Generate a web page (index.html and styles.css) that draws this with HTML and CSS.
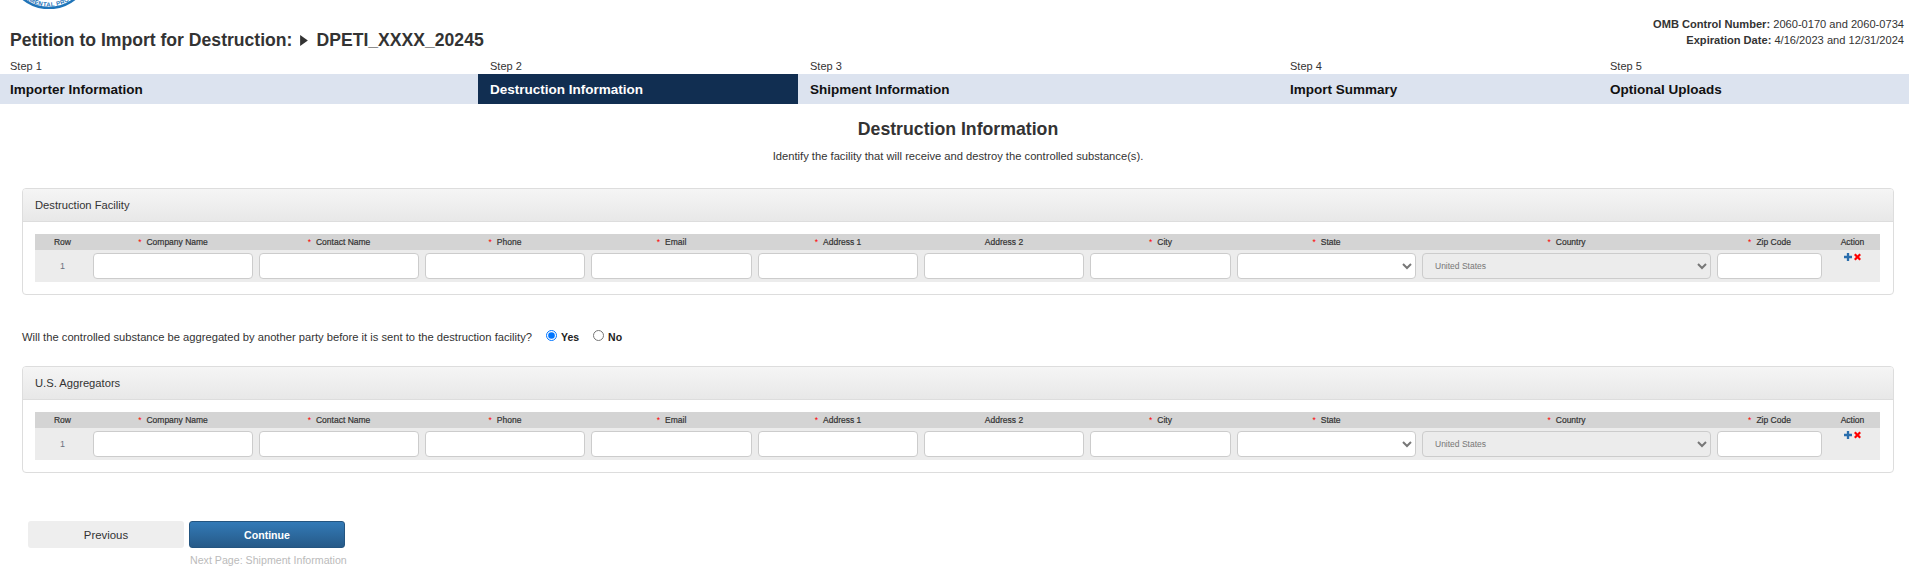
FILE: index.html
```html
<!DOCTYPE html>
<html lang="en">
<head>
<meta charset="utf-8">
<title>Petition to Import for Destruction</title>
<link rel="stylesheet" href="styles.css">
</head>
<body>
<svg class="seal" width="54" height="9" viewBox="0 0 54 9" aria-hidden="true">
  <defs><path id="sealArc" d="M-7.200 -13.250 A39.500 39.500 0 0 0 61.200 -13.250"/></defs>
  <circle cx="27" cy="-33" r="41" fill="#fff" stroke="#1f74b8" stroke-width="2.500"/>
  <text class="seal-text"><textPath href="#sealArc" startOffset="50%" text-anchor="middle">ENVIRONMENTAL PROTECTION</textPath></text>
</svg>
<header class="title-row">
  <h1 class="page-title">Petition to Import for Destruction:<svg class="caret" width="8" height="11" viewBox="0 0 7 10" aria-hidden="true"><path d="M0 0 7 5 0 10z" fill="#333"/></svg>DPETI_XXXX_20245</h1>
  <div class="omb">
    <div><b>OMB Control Number:</b> 2060-0170 and 2060-0734</div>
    <div><b>Expiration Date:</b> 4/16/2023 and 12/31/2024</div>
  </div>
</header>
<nav class="steps">
  <div class="step first"><div class="step-label">Step 1</div><div class="step-name">Importer Information</div></div>
  <div class="step active"><div class="step-label">Step 2</div><div class="step-name">Destruction Information</div></div>
  <div class="step"><div class="step-label">Step 3</div><div class="step-name">Shipment Information</div></div>
  <div class="step"><div class="step-label">Step 4</div><div class="step-name">Import Summary</div></div>
  <div class="step"><div class="step-label">Step 5</div><div class="step-name">Optional Uploads</div></div>
</nav>
<h2 class="heading">Destruction Information</h2>
<p class="sub">Identify the facility that will receive and destroy the controlled substance(s).</p>

<section class="panel">
  <div class="panel-head">Destruction Facility</div>
  <div class="panel-body">
    <table class="grid">
      <colgroup><col class="c-row"><col class="c-a"><col class="c-a"><col class="c-a"><col class="c-b"><col class="c-a"><col class="c-a"><col class="c-city"><col class="c-state"><col class="c-country"><col class="c-zip"><col class="c-act"></colgroup>
      <thead><tr><th>Row</th><th><i>*</i>Company Name</th><th><i>*</i>Contact Name</th><th><i>*</i>Phone</th><th><i>*</i>Email</th><th><i>*</i>Address 1</th><th>Address 2</th><th><i>*</i>City</th><th><i>*</i>State</th><th><i>*</i>Country</th><th><i>*</i>Zip Code</th><th>Action</th></tr></thead>
      <tbody><tr>
        <td class="num">1</td>
        <td><input type="text"></td><td><input type="text"></td><td><input type="text"></td><td><input type="text"></td><td><input type="text"></td><td><input type="text"></td><td><input type="text"></td>
        <td><select><option></option></select></td>
        <td><select disabled><option>United States</option></select></td>
        <td><input type="text"></td>
        <td class="act">
          <svg width="8" height="8" viewBox="0 0 9 9"><path d="M3.200 0h2.600v3.200H9v2.600H5.800V9H3.200V5.800H0V3.200h3.200z" fill="#2a6ead"/></svg>
          <svg width="7" height="8" viewBox="0 0 8 9"><path d="M1.800.500 4 2.700 6.200.500 8 2.300 5.800 4.500 8 6.700 6.200 8.500 4 6.300 1.800 8.500 0 6.700 2.200 4.500 0 2.300z" fill="#f00"/></svg>
        </td>
      </tr></tbody>
    </table>
  </div>
</section>

<div class="question">
  <span>Will the controlled substance be aggregated by another party before it is sent to the destruction facility?</span>
  <label class="opt"><input type="radio" name="agg" checked><b>Yes</b></label>
  <label class="opt"><input type="radio" name="agg"><b>No</b></label>
</div>

<section class="panel">
  <div class="panel-head">U.S. Aggregators</div>
  <div class="panel-body">
    <table class="grid">
      <colgroup><col class="c-row"><col class="c-a"><col class="c-a"><col class="c-a"><col class="c-b"><col class="c-a"><col class="c-a"><col class="c-city"><col class="c-state"><col class="c-country"><col class="c-zip"><col class="c-act"></colgroup>
      <thead><tr><th>Row</th><th><i>*</i>Company Name</th><th><i>*</i>Contact Name</th><th><i>*</i>Phone</th><th><i>*</i>Email</th><th><i>*</i>Address 1</th><th>Address 2</th><th><i>*</i>City</th><th><i>*</i>State</th><th><i>*</i>Country</th><th><i>*</i>Zip Code</th><th>Action</th></tr></thead>
      <tbody><tr>
        <td class="num">1</td>
        <td><input type="text"></td><td><input type="text"></td><td><input type="text"></td><td><input type="text"></td><td><input type="text"></td><td><input type="text"></td><td><input type="text"></td>
        <td><select><option></option></select></td>
        <td><select disabled><option>United States</option></select></td>
        <td><input type="text"></td>
        <td class="act">
          <svg width="8" height="8" viewBox="0 0 9 9"><path d="M3.200 0h2.600v3.200H9v2.600H5.800V9H3.200V5.800H0V3.200h3.200z" fill="#2a6ead"/></svg>
          <svg width="7" height="8" viewBox="0 0 8 9"><path d="M1.800.500 4 2.700 6.200.500 8 2.300 5.800 4.500 8 6.700 6.200 8.500 4 6.300 1.800 8.500 0 6.700 2.200 4.500 0 2.300z" fill="#f00"/></svg>
        </td>
      </tr></tbody>
    </table>
  </div>
</section>

<div class="buttons">
  <button class="btn prev" type="button">Previous</button>
  <button class="btn next" type="button">Continue</button>
</div>
<div class="next-page">Next Page: Shipment Information</div>
</body>
</html>
```
FILE: styles.css
```css
* { box-sizing: border-box; }
html, body { margin: 0; padding: 0; background: #fff; }
body { font-family: "Liberation Sans", Arial, sans-serif; color: #333; font-size: 11px; height: 579px; overflow: hidden; }

.seal { display: block; margin-left: 22px; height: 9px; overflow: hidden; }
.seal-text { font: bold 6px "Liberation Sans", sans-serif; letter-spacing: .3px; fill: #1f74b8; }

.title-row { display: flex; justify-content: space-between; height: 49px; padding: 7px 5px 0 10px; }
.page-title { display: flex; align-items: center; gap: 8px; margin: 12px 0 0; height: 24px; font-size: 17.600px; line-height: 24px; font-weight: bold; color: #333; white-space: nowrap; }
.caret { display: block; }
.omb { text-align: right; font-size: 11.100px; line-height: 16px; color: #333; }

.steps { display: grid; grid-template-columns: 478px 320px 480px 320px 1fr; }
.step-label { height: 16px; line-height: 16px; padding-left: 12px; font-size: 11px; color: #333; }
.step-name { height: 30px; line-height: 31px; padding-left: 12px; font-size: 13.500px; font-weight: bold; color: #111; background: #dce3ef; }
.step.first .step-label, .step.first .step-name { padding-left: 10px; }
.step.active .step-name { background: #112e51; color: #fff; }

.heading { margin: 13px 0 0; padding-left: 7px; text-align: center; font-size: 17.700px; line-height: 24px; font-weight: bold; color: #333; }
.sub { margin: 7px 0 24px; padding-left: 7px; text-align: center; font-size: 11.200px; line-height: 16px; color: #333; }

.panel { margin: 0 15px 0 22px; height: 107px; border: 1px solid #ddd; border-radius: 4px; background: #fff; }
.panel-head { height: 33px; line-height: 32px; padding-left: 12px; font-size: 11.200px; color: #333; border-bottom: 1px solid #ddd; border-radius: 3px 3px 0 0; background: linear-gradient(#f5f5f5, #e8e8e8); }
.panel-body { padding: 12px 13px 12px 12px; }

.grid { width: 1845px; border-collapse: collapse; table-layout: fixed; }
.c-row { width: 55px; }
.c-a { width: 166px; }
.c-b { width: 167px; }
.c-city { width: 147px; }
.c-state { width: 185px; }
.c-country { width: 295px; }
.c-zip { width: 111px; }
.c-act { width: 55px; }
.grid th { height: 16px; padding: 0; background: #d4d4d4; font-size: 8.500px; line-height: 16px; font-weight: normal; color: #333; text-align: center; -webkit-text-stroke: 0.2px #333; white-space: nowrap; }
.grid th i { font-style: normal; color: #f00; margin-right: 5px; -webkit-text-stroke: 0; }
.grid td { height: 32px; padding: 3px; background: #ececec; vertical-align: top; }
.grid td.num { text-align: center; vertical-align: middle; font-size: 9px; color: #6b7280; }
.grid td.act { padding: 3px 0 0 19px; white-space: nowrap; font-size: 0; }
.act svg + svg { margin-left: 2px; }

.grid input, .grid select { display: block; width: 100%; height: 26px; margin: 0; border: 1px solid #ccc; border-radius: 4px; background-color: #fff; font: 8.500px "Liberation Sans", sans-serif; color: #777; padding: 0 8px; }
.grid select:disabled { background-color: #ececec; opacity: 1; color: #777; }

.question { display: flex; align-items: center; height: 16px; margin: 34px 0 21px 22px; font-size: 11.200px; line-height: 16px; color: #333; }
.opt { display: flex; align-items: center; margin-left: 14px; color: #222; }
.opt input { margin: -4px 4px 0 0; width: 11px; height: 11px; }
.opt b { font-size: 10.500px; }

.buttons { display: flex; gap: 5px; margin: 48px 0 0 28px; }
.btn { width: 156px; height: 27px; padding: 1px 0 0; border-radius: 3px; font: 11.400px "Liberation Sans", sans-serif; }
.prev { border: 0; background: #eee; color: #333; }
.next { border: 1px solid #245580; background: linear-gradient(#337ab7, #265a88); color: #fff; font-weight: bold; font-size: 10.600px; }
.next-page { margin: 4px 0 0 190px; font-size: 10.650px; line-height: 16px; color: #bbb; }
```
